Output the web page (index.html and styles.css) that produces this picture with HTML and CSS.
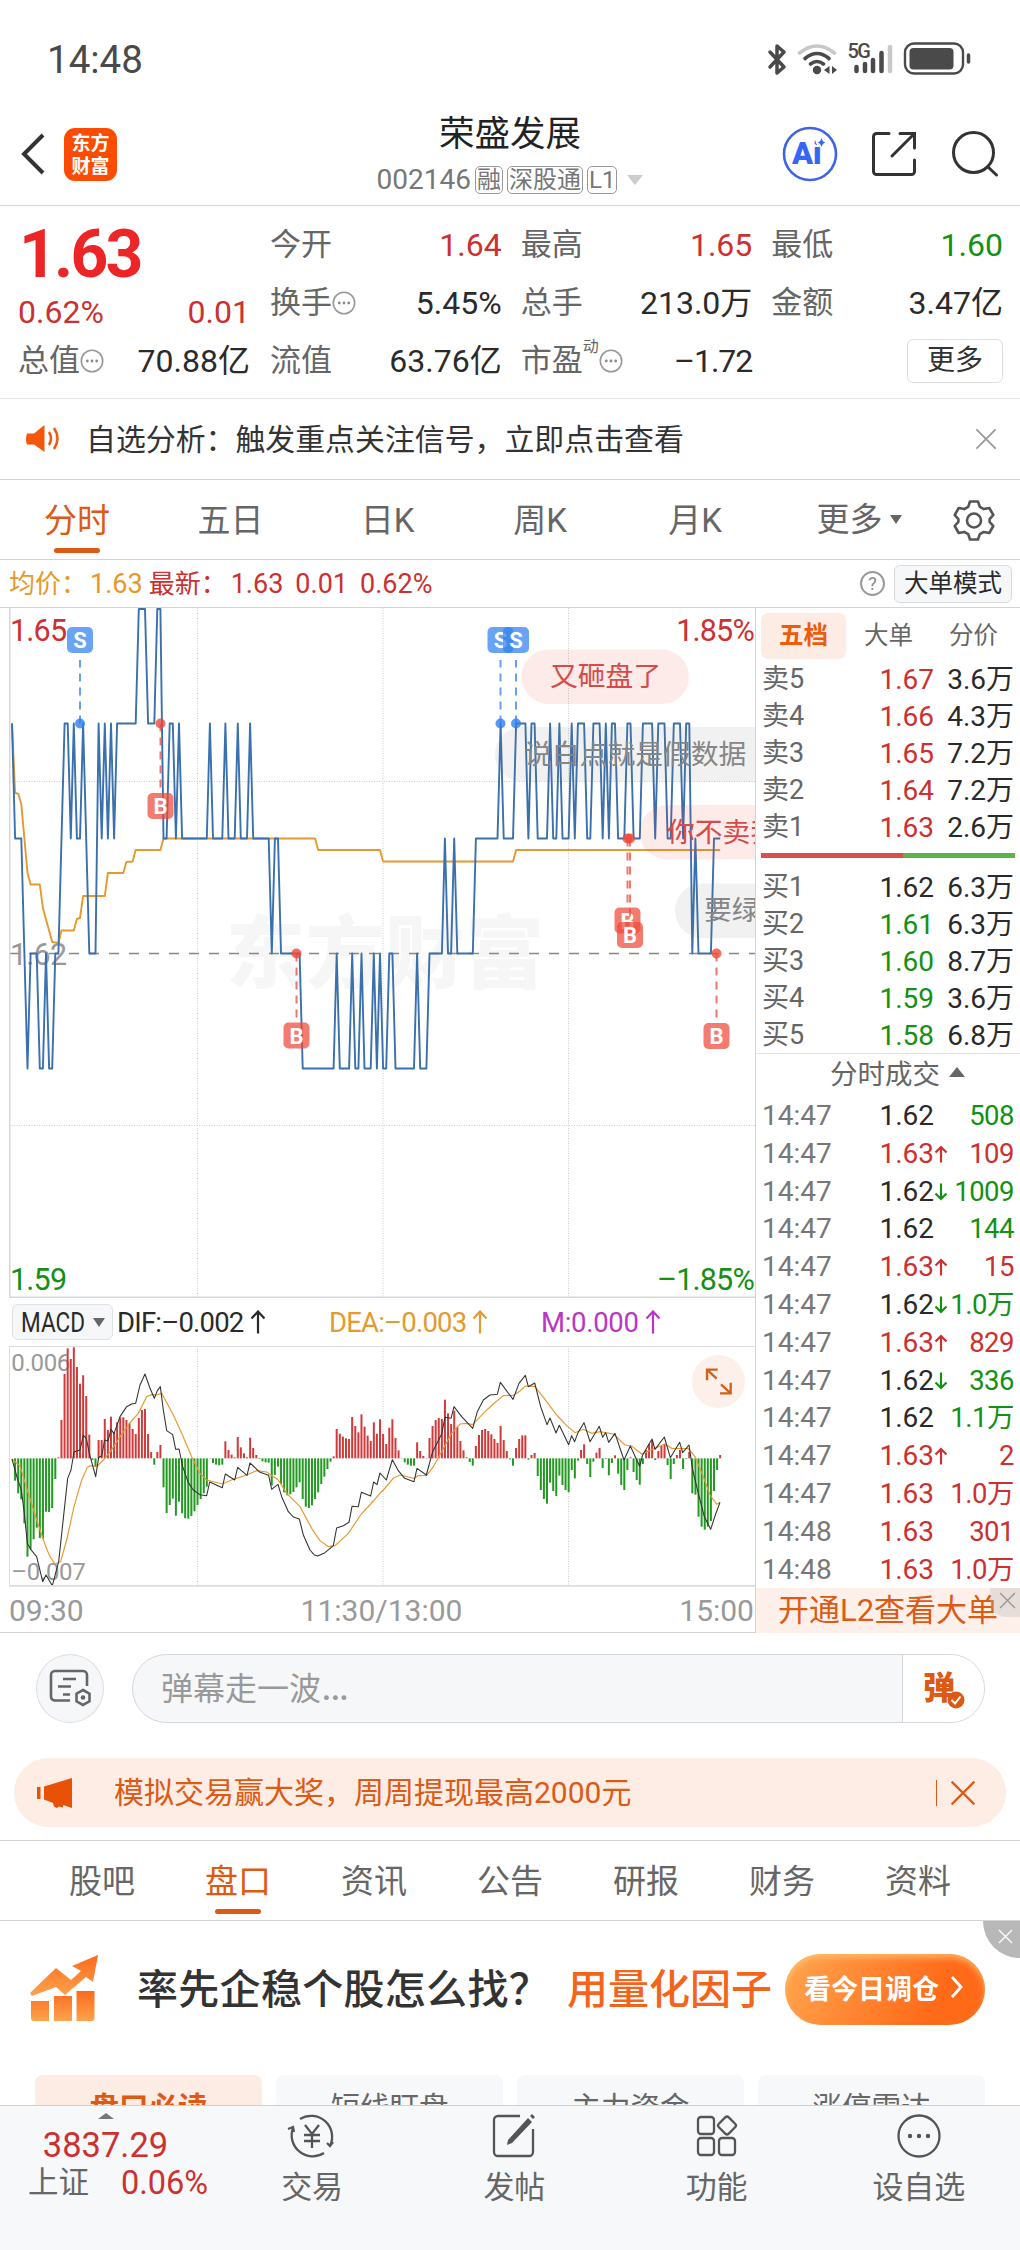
FILE: index.html
```html
<!doctype html>
<html lang="zh-CN">
<head>
	<meta charset="utf-8">
	<title>荣盛发展 002146</title>
	<link rel="stylesheet" href="styles.css">
</head>
<body>
	<svg class="defs" width="0" height="0">
		<symbol id="dots" viewBox="0 0 24 24"><circle cx="12" cy="12" r="10.7" fill="none" stroke="#999" stroke-width="1.6"/><circle cx="7.3" cy="12" r="1.4" fill="#888"/><circle cx="12" cy="12" r="1.4" fill="#888"/><circle cx="16.7" cy="12" r="1.4" fill="#888"/></symbol>
		<symbol id="cross" viewBox="0 0 24 24"><path d="M1.5 1.5l21 21M22.5 1.5l-21 21" fill="none" stroke="currentColor" stroke-width="2"/></symbol>
		<symbol id="up" viewBox="0 0 16 24"><path d="M8 23.5V1.5M1.5 8.5L8 1.5l6.500 7" fill="none" stroke="currentColor" stroke-width="2.2"/></symbol>
		<symbol id="tick-up" viewBox="0 0 14 18"><path d="M7 17.500V2M1.500 7.500L7 2l5.500 5.500" fill="none" stroke="currentColor" stroke-width="2.200"/></symbol>
	</svg>

	<div class="status">
		<span class="clock">14:48</span>
		<svg width="206" height="38" viewBox="764 41 206 38">
			<path d="M769 52l14 15-7 6V46l7 6-14 15" fill="none" stroke="#4a4a4a" stroke-width="3.500" stroke-linejoin="round" stroke-linecap="round"/>
			<g fill="none" stroke-width="3.600" stroke-linecap="round">
				<path d="M798.500 53q17.500-14 35 0" stroke="#c8c8c8"/>
				<path d="M804 58.500q12-10 24 0M809.500 64q6.500-5 13 0" stroke="#4a4a4a"/>
			</g>
			<circle cx="816" cy="70" r="4.200" fill="#4a4a4a"/>
			<path d="M828.500 66v8l-5.500-4zM831 66v8l5-4z" fill="#4a4a4a"/>
			<text x="846.500" y="58" class="net">5G</text>
			<g stroke-width="4.500" stroke-linecap="round">
				<path d="M855.500 67v4M864 64v7M872 60v11M880.500 53v18" stroke="#4a4a4a"/>
				<path d="M889 47v24" stroke="#c8c8c8"/>
			</g>
			<rect x="904" y="43.500" width="58" height="30" rx="9" fill="none" stroke="#4a4a4a" stroke-width="2.400"/>
			<rect x="908.500" y="48" width="44" height="21.500" rx="4" fill="#4a4a4a"/>
			<path d="M967.500 55v7" stroke="#4a4a4a" stroke-width="3.500" stroke-linecap="round"/>
		</svg>
	</div>

	<header class="header">
		<div class="header-left">
			<svg width="28" height="46" viewBox="0 0 28 46"><path d="M24 4L5 23l19 19" fill="none" stroke="#333" stroke-width="4"/></svg>
			<div class="logo"><b>东方</b><b>财富</b></div>
		</div>
		<div class="stock">
			<h1>荣盛发展</h1>
			<div class="code">002146<i>融</i><i>深股通</i><i>L1</i><span class="caret"></span></div>
		</div>
		<div class="header-right">
			<svg width="56" height="56" viewBox="0 0 56 56"><circle cx="28" cy="28" r="26" fill="#fff" stroke="#3f63e6" stroke-width="2.600"/><text x="10" y="38" class="ai">Ai</text><circle cx="38.500" cy="15" r="5" fill="#fff"/><path d="M39.500 12q1 4 4 4.500-3 .5-4 4.500-1-4-4-4.500 3-.5 4-4.500z" fill="#3566f5"/></svg>
			<svg width="48" height="48" viewBox="0 0 48 48"><g fill="none" stroke="#333" stroke-width="3" stroke-linecap="round"><path d="M19 3.500H6.500a3 3 0 0 0-3 3v35a3 3 0 0 0 3 3h35a3 3 0 0 0 3-3V30"/><path d="M30 3.500h14.500V18M44 4L22 26"/></g></svg>
			<svg width="50" height="50" viewBox="0 0 50 50"><g fill="none" stroke="#333" stroke-width="3" stroke-linecap="round"><circle cx="23.500" cy="23.500" r="20"/><path d="M38 38l8.500 8"/></g></svg>
		</div>
	</header>

	<section class="quote">
		<div class="quote-left">
			<div class="price">1.63</div>
			<div class="change red"><span>0.62%</span><span>0.01</span></div>
			<div class="cell"><label>总值<svg class="info"><use href="#dots"/></svg></label><span>70.88亿</span></div>
		</div>
		<div class="quote-grid">
			<div class="cell"><label>今开</label><span class="red">1.64</span></div>
			<div class="cell"><label>最高</label><span class="red">1.65</span></div>
			<div class="cell"><label>最低</label><span class="green">1.60</span></div>
			<div class="cell"><label>换手<svg class="info"><use href="#dots"/></svg></label><span>5.45%</span></div>
			<div class="cell"><label>总手</label><span>213.0万</span></div>
			<div class="cell"><label>金额</label><span>3.47亿</span></div>
			<div class="cell"><label>流值</label><span>63.76亿</span></div>
			<div class="cell"><label>市盈<sup>动</sup><svg class="info"><use href="#dots"/></svg></label><span class="neg">–1.72</span></div>
			<div class="cell cell-more"><button class="more">更多</button></div>
		</div>
	</section>

	<div class="notice">
		<svg width="36" height="30" viewBox="0 0 36 30"><path d="M2 9.500h7L19.500 1v27L9 20.500H2Q0 15 2 9.500z" fill="#f4580a"/><path d="M24 8q4 6.500 0 13M29 4q7 10.500 0 21" fill="none" stroke="#f4580a" stroke-width="2.500"/></svg>
		<p>自选分析：触发重点关注信号，立即点击查看</p>
		<svg class="close" width="22" height="22"><use href="#cross"/></svg>
	</div>

	<nav class="periods">
		<a class="on">分时</a>
		<a>五日</a>
		<a>日K</a>
		<a>周K</a>
		<a>月K</a>
		<a class="period-more">更多<span class="tri"></span></a>
		<a class="gear"><svg width="42" height="42" viewBox="0 0 42 42"><g fill="none" stroke="#555" stroke-width="2.600" stroke-linejoin="round"><path d="M17 2.500h8l1.800 5.300 4 2.300 5.500-1.100 4 7-3.700 4.200v2.600l3.700 4.200-4 7-5.500-1.100-4 2.300-1.800 5.300h-8l-1.800-5.300-4-2.300L5.700 34l-4-7 3.700-4.200v-2.600L1.700 16l4-7 5.500 1.100 4-2.300z"/><circle cx="21" cy="21.500" r="7"/></g></svg></a>
	</nav>

	<div class="summary">
		<span class="avg">均价：<em>1.63</em></span>
		<span class="last">最新：<em>1.63</em><em>0.01</em><em>0.62%</em></span>
		<span class="help">?</span>
		<span class="mode">大单模式</span>
	</div>

	<main class="market">
		<div class="charts">
			<svg class="main-chart" width="746" height="690" viewBox="9 608 746 690">
				<text x="226" y="982" class="mark" textLength="318">东方财富</text>
				<path class="grid" d="M197.500 608v690M383 608v690M568.500 608v690M9 781.500h746M9 1125.500h746"/>
				<path class="mid" d="M9 953.500h746"/>
				<text x="10" y="641" class="axis red">1.65</text>
				<text x="754" y="641" class="axis red end">1.85%</text>
				<text x="10" y="965" class="axis gray">1.62</text>
				<text x="10" y="1290" class="axis green">1.59</text>
				<text x="754" y="1290" class="axis green end">–1.85%</text>
				<path id="avg" class="avg-line"/>
				<path id="price" class="price-line"/>
				<g class="bubble hot"><rect x="521.500" y="649.500" width="167.500" height="54.500" rx="27"/><text x="550" y="686">又砸盘了</text></g>
				<g class="bubble"><rect x="495" y="727" width="300" height="54.500" rx="27"/><text x="524" y="764">说白点就是假数据</text></g>
				<g class="bubble hot"><rect x="640" y="805" width="200" height="54.500" rx="27"/><text x="667" y="842">你不卖我</text></g>
				<g class="bubble"><rect x="675" y="883.500" width="200" height="54.500" rx="27"/><text x="704" y="920">要绿</text></g>
				<g id="marks"></g>
				<path class="edge" d="M9.500 608v690"/>
				<path class="edge" d="M9 1297.500h746"/>
			</svg>
			<div class="indicator">
				<span class="chip"><b>MACD</b><span class="tri"></span></span>
				<span class="dif">DIF:–0.002<svg width="16" height="24"><use href="#up"/></svg></span>
				<span class="dea">DEA:–0.003<svg width="16" height="24"><use href="#up"/></svg></span>
				<span class="m">M:0.000<svg width="16" height="24"><use href="#up"/></svg></span>
			</div>
			<!-- 3 units per pixel -->
			<svg class="macd" width="746" height="241" viewBox="27 258 2238 723">
				<path class="grid3" d="M592.500 258v720M1149 258v720M1705.500 258v720"/>
				<text x="34" y="333">0.006</text>
				<text x="34" y="959">–0.007</text>
				<g id="bars"></g>
				<path class="dea-line" d="M36 597L60 618 82 690 110 780 138 862 150 890 165 912 182 905 200 840 222 740 245 660 262 622 272 617 290 620 310 600 333 572 360 530 390 488 415 460 440 410 455 404 470 405 485 400 520 465 545 520 575 590 600 640 620 660 667 672 700 658 740 645 770 632 800 636 835 660 860 700 900 740 935 805 960 842 985 860 1005 857 1045 820 1084 762 1112 732 1140 700 1150 690 1180 655 1200 645 1242 655 1255 647 1280 646 1300 620 1325 575 1355 520 1380 492 1400 490 1418 494 1450 460 1480 432 1510 407 1540 406 1560 393 1576 378 1605 380 1640 425 1670 465 1700 497 1725 518 1750 508 1775 520 1800 515 1840 522 1875 555 1895 558 1925 582 1960 567 1995 552 2015 565 2065 566 2085 590 2110 650 2130 705 2150 733 2160 727"/>
				<path class="dif-line" d="M36 597L52 655 64 690 73 760 82 850 92 868 110 890 128 965 138 945 157 977 176 905 203 655 213 630 222 576 240 570 250 526 259 535 268 580 287 650 296 592 305 588 314 540 324 543 333 508 342 521 360 470 380 440 395 432 407 430 420 375 435 342 450 385 463 415 472 392 481 380 490 450 500 512 518 524 527 568 537 567 548 620 565 668 580 690 600 704 620 707 629 666 667 683 676 642 704 660 713 622 741 646 750 609 780 637 806 646 815 688 834 673 845 710 865 755 880 771 898 777 910 825 930 870 942 884 953 888 975 878 1000 857 1010 804 1030 797 1047 787 1056 739 1075 740 1084 697 1112 708 1121 666 1131 674 1140 639 1159 660 1177 599 1195 632 1214 655 1242 665 1251 625 1279 645 1298 575 1325 522 1335 472 1353 475 1362 440 1385 470 1418 505 1432 455 1450 420 1470 405 1492 403 1501 367 1539 418 1557 370 1576 346 1585 380 1604 369 1622 440 1641 494 1650 474 1668 519 1678 496 1706 554 1715 527 1724 545 1733 520 1752 488 1770 545 1798 499 1808 532 1817 518 1826 547 1845 520 1872 600 1891 558 1919 619 1928 585 1956 537 1965 568 1993 531 2011 593 2039 547 2048 578 2067 555 2078 630 2095 700 2113 770 2132 808 2146 765 2160 727"/>
				<path d="M28.500 258v720M27 259.500h2238" stroke="#ddd" stroke-width="3" fill="none"/>
				<path d="M27 977.500h2238" stroke="#ddd" stroke-width="5" fill="none"/>
				<circle cx="2155.500" cy="364.500" r="79.500" fill="#fdf0ea"/>
				<path d="M2121 361v-32h32M2121 329l29 27M2192 368v32h-32M2192 400l-29-27" fill="none" stroke="#d4601c" stroke-width="7"/>
			</svg>
			<div class="times"><span>09:30</span><span>11:30/13:00</span><span>15:00</span></div>
		</div>

		<aside class="book">
			<div class="book-tabs"><a class="on">五档</a><a>大单</a><a>分价</a></div>
			<div class="levels">
				<div><label>卖5</label><b class="red">1.67</b><span>3.6万</span></div>
				<div><label>卖4</label><b class="red">1.66</b><span>4.3万</span></div>
				<div><label>卖3</label><b class="red">1.65</b><span>7.2万</span></div>
				<div><label>卖2</label><b class="red">1.64</b><span>7.2万</span></div>
				<div><label>卖1</label><b class="red">1.63</b><span>2.6万</span></div>
			</div>
			<div class="ratio"><i></i></div>
			<div class="levels buy">
				<div><label>买1</label><b>1.62</b><span>6.3万</span></div>
				<div><label>买2</label><b class="green">1.61</b><span>6.3万</span></div>
				<div><label>买3</label><b class="green">1.60</b><span>8.7万</span></div>
				<div><label>买4</label><b class="green">1.59</b><span>3.6万</span></div>
				<div><label>买5</label><b class="green">1.58</b><span>6.8万</span></div>
			</div>
			<div class="ticks-title">分时成交<span></span></div>
			<div class="ticks" id="ticks"></div>
			<div class="promo">开通L2查看大单<span><svg width="17" height="17"><use href="#cross"/></svg></span></div>
		</aside>
	</main>

	<div class="comment">
		<div class="comment-set"><svg width="42" height="40" viewBox="0 0 42 40"><g fill="none" stroke="#666" stroke-width="2.600"><path d="M21 31.500H6a4 4 0 0 1-4-4V6a4 4 0 0 1 4-4h28a4 4 0 0 1 4 4v11"/><path d="M14 10h13M9 17.500h13M14 25.500h7"/><path d="M34 21l6.500 3.700v7.600L34 36l-6.500-3.700v-7.600z"/></g><circle cx="34" cy="28.500" r="2.300" fill="#666"/></svg></div>
		<div class="comment-box">
			<span class="placeholder">弹幕走一波<i>…</i></span>
			<span class="danmu">弹<svg width="18" height="18" viewBox="0 0 18 18"><circle cx="9" cy="9" r="8.500" fill="#dc5a14"/><path d="M4.500 9l3.500 3.500 5.500-7" fill="none" stroke="#fff" stroke-width="2"/></svg></span>
		</div>
	</div>

	<div class="banner">
		<svg width="36" height="32" viewBox="0 0 36 32"><path d="M0 10h3.500v12H0zM7 9.500L35 1v30l-9-3v2.500l-4-1-2 1.500-3-1.500L16 26 7 22.500z" fill="#e85206"/></svg>
		<p>模拟交易赢大奖，周周提现最高2000元</p>
		<span class="banner-close"><svg width="26" height="26"><use href="#cross"/></svg></span>
	</div>

	<nav class="tabs">
		<a>股吧</a><a class="on">盘口</a><a>资讯</a><a>公告</a><a>研报</a><a>财务</a><a>资料</a>
	</nav>

	<div class="ad">
		<svg width="70" height="68" viewBox="0 0 70 68">
			<defs><linearGradient id="g" x1="0" y1="0" x2="0" y2="1"><stop offset="0" stop-color="#fb6a1e"/><stop offset="1" stop-color="#ffa34d"/></linearGradient></defs>
			<path d="M1 46h18v20H4q-3 0-3-3zM24 41h18v25H24zM46.500 36h18v27q0 3-3 3h-15z" fill="url(#g)"/>
			<path d="M0 38L26 13l15 12 10-9-9-5L68 0l-5 27-7-5-21 18-9-8L2 41z" fill="url(#g)"/>
		</svg>
		<p>率先企稳个股怎么找？</p>
		<p class="hl">用量化因子</p>
		<span class="cta">看今日调仓<svg width="14" height="24" viewBox="0 0 14 24"><path d="M2 2l9 10-9 10" fill="none" stroke="#fff" stroke-width="2.800"/></svg></span>
		<span class="ad-close"><svg width="15" height="15"><use href="#cross"/></svg></span>
	</div>

	<div class="cards"><a class="on">盘口必读</a><a>短线盯盘</a><a>主力资金</a><a>涨停雷达</a></div>

	<footer class="toolbar">
		<div class="index">
			<span class="tri-up"></span>
			<b>3837.29</b>
			<p><span>上证</span><em>0.06%</em></p>
		</div>
		<a><svg width="52" height="46" viewBox="0 0 52 46"><g fill="none" stroke="#555" stroke-width="2.300"><path d="M14 6A21 21 0 0 1 44 33M47 29l-3 4-3-3M38 40A21 21 0 0 1 7 15M2 16l5-2 1 5"/><path d="M19 12l7 9 7-9M26 21v14M18 22h16M18 28h16"/></g></svg>交易</a>
		<a><svg width="44" height="46" viewBox="0 0 44 46"><path d="M28 3H6a4 4 0 0 0-4 4v32a4 4 0 0 0 4 4h31a4 4 0 0 0 4-4V16" fill="none" stroke="#555" stroke-width="2.300"/><path d="M16 27L36 5l4 4-20 21-5 2zM38 3l2-2 3 3-2 2z" fill="#555"/></svg>发帖</a>
		<a><svg width="44" height="46" viewBox="0 0 44 46"><g fill="none" stroke="#555" stroke-width="2.300"><rect x="3" y="4" width="16" height="17" rx="3"/><rect x="3" y="25" width="16" height="17" rx="3"/><rect x="24" y="25" width="16" height="17" rx="3"/><rect x="25" y="5.500" width="14" height="14" rx="2.500" transform="rotate(45 32 12.500)"/></g></svg>功能</a>
		<a><svg width="46" height="46" viewBox="0 0 46 46"><circle cx="23" cy="23" r="20.500" fill="none" stroke="#555" stroke-width="2.300"/><circle cx="14" cy="23" r="2.200" fill="#555"/><circle cx="23" cy="23" r="2.200" fill="#555"/><circle cx="32" cy="23" r="2.200" fill="#555"/></svg>设自选</a>
	</footer>
	<script src="chart.js"></script>
</body>
</html>
```
FILE: styles.css
```css
* { box-sizing: border-box; margin: 0; padding: 0; }
body {
	width: 1020px; height: 2250px; overflow: hidden;
	display: flex; flex-direction: column;
	background: #fff; color: #2a2a2a;
	font-family: Roboto, "Noto Sans CJK SC", sans-serif;
}
svg { display: block; flex: none; }
i, em { font-style: normal; }
button { font: inherit; }
.defs { position: absolute; }
.red { color: #cc3030; fill: #cc3030; }
.green { color: #149014; fill: #149014; }
.gray { fill: #999; }

/* status bar */
.status { height: 106px; padding: 14px 49px 0 47px; display: flex; align-items: center; justify-content: space-between; flex: none; }
.clock { font-size: 38.500px; line-height: 44px; color: #4a4a4a; }
.net { font-size: 20px; font-weight: 500; fill: #4a4a4a; letter-spacing: -1.500px; }

/* header */
.header { height: 100px; flex: none; display: grid; grid-template-columns: 1fr auto 1fr; align-items: center; border-bottom: 1px solid #d4d4d4; }
.header-left { display: flex; align-items: center; gap: 17px; padding: 0 0 3px 19px; }
.logo { width: 53px; height: 53px; border-radius: 11px; background: #fc4c02; color: #fff; text-align: center; padding-top: 4px; }
.logo b { display: block; font-size: 19px; line-height: 23px; font-weight: 700; }
.stock { text-align: center; padding-top: 2px; }
.stock h1 { font-size: 35.500px; line-height: 46px; font-weight: 400; color: #222; }
.code { display: flex; align-items: center; height: 46px; font-size: 28px; color: #777; gap: 4px; }
.code i { font-size: 24px; line-height: 26px; border: 1.500px solid #999; border-radius: 5px; padding: 0 1px; }
.caret { margin-left: 6px; border: 8px solid transparent; border-top: 10px solid #ccc; border-bottom: 0; }
.header-right { display: flex; align-items: center; justify-content: flex-end; gap: 32px; padding: 0 20px 4px 0; }
.ai { font: 900 31px Roboto, sans-serif; fill: #3566f5; }

/* quote */
.quote { height: 193px; flex: none; display: flex; gap: 20px; padding: 10px 17px 0 18px; border-bottom: 1px solid #e8e8e8; font-size: 32px; }
.quote-left { width: 232px; }
.price { height: 76px; line-height: 77px; font-size: 66px; font-weight: 700; letter-spacing: -2.800px; color: #ec2626; padding-left: 1px; }
.change { height: 40px; line-height: 40px; display: flex; justify-content: space-between; }
.quote-grid { flex: 1; display: grid; grid-template-columns: repeat(3, 1fr); grid-auto-rows: 58px; column-gap: 19px; }
.cell { height: 58px; display: flex; align-items: center; justify-content: space-between; line-height: 58px; white-space: nowrap; }
.cell label { font-size: 31px; color: #666; display: flex; align-items: center; }
.cell sup { font-size: 16px; line-height: 20px; align-self: flex-start; margin-top: 5px; color: #666; }
.cell .neg { letter-spacing: -1px; }
.info { width: 24px; height: 24px; }
.cell-more { justify-content: flex-end; }
.more { width: 96px; height: 44px; font-size: 28px; line-height: 40px; background: #fff; color: #333; border: 1px solid #ddd; border-radius: 6px; }

.notice { height: 81px; flex: none; display: flex; align-items: center; padding: 0 23px 0 25px; border-bottom: 1px solid #d4d4d4; }
.notice p { font-size: 29.900px; margin-left: 25px; padding-bottom: 5px; color: #333; }
.close { margin-left: auto; color: #999; }

/* period tabs */
.periods { height: 80px; flex: none; display: flex; align-items: center; border-bottom: 1px solid #d4d4d4; font-size: 33px; color: #666; }
.periods a { width: 154px; height: 79px; line-height: 81px; text-align: center; position: relative; }
.periods a:nth-child(2) { width: 153px; }
.periods a:nth-child(3) { width: 161px; }
.periods a:nth-child(4) { width: 144px; }
.periods a:nth-child(5) { width: 166px; }
.periods .period-more { width: 162px; display: flex; align-items: center; justify-content: center; gap: 7px; }
.periods .gear { width: 80px; padding-left: 13px; display: flex; align-items: center; }
.periods .on, .tabs .on { color: #dc5a14; }
.periods .on:after, .tabs .on:after { content: ""; position: absolute; left: 50%; bottom: 6px; width: 46px; height: 5px; margin-left: -23px; border-radius: 3px; background: #dc5a14; }
.tri { border: 6px solid transparent; border-top: 9px solid #666; border-bottom: 0; }

.summary { height: 48px; flex: none; display: flex; align-items: center; padding: 0 8px 0 9px; border-bottom: 1px solid #d4d4d4; font-size: 26px; line-height: 40px; }
.summary em { font-size: 27px; margin-right: 12px; }
.avg { color: #e8982a; }
.avg em { margin: 0 6px 0 3px; }
.last { color: #cc3030; }
.last em:first-child { margin-left: 4px; }
.help { margin-left: auto; width: 25px; height: 25px; border: 2px solid #999; border-radius: 50%; font-size: 18px; line-height: 22px; text-align: center; color: #888; }
.mode { margin-left: 9px; height: 38px; width: 118px; text-align: center; line-height: 35px; font-size: 24.500px; background: #f6f7f9; border: 1px solid #d8dade; border-radius: 6px; }

/* charts */
.market { height: 1025px; flex: none; display: flex; border-bottom: 1px solid #d4d4d4; }
.charts { width: 756px; flex: none; border-right: 1px solid #d4d4d4; padding-left: 9px; }
.grid { fill: none; stroke: #ccc; stroke-dasharray: 1 1.500; }
.grid3 { fill: none; stroke: #ccc; stroke-width: 3; stroke-dasharray: 3 4.500; }
.mid { stroke: #888; stroke-width: 1.500; stroke-dasharray: 10 10; }
.edge { stroke: #d8d8d8; stroke-width: 2; }
.mark { font-size: 79px; font-weight: 900; fill: #f6f6f6; }
.axis { font-size: 30.500px; letter-spacing: -.8px; }
.end { text-anchor: end; }
.avg-line, .price-line { fill: none; stroke-width: 1.900; stroke-linejoin: round; }
.avg-line { stroke: #e49a30; }
.price-line { stroke: #3a70ae; }
.bubble rect { fill: rgba(120, 120, 120, .1); }
.bubble text { font-size: 27.800px; fill: #868686; }
.hot rect { fill: rgba(236, 60, 50, .1); }
.hot text { fill: #d64a48; }
.flag { font: 700 22px Roboto, sans-serif; fill: #fff; text-anchor: middle; }

.indicator { height: 48px; display: flex; align-items: center; font-size: 27.500px; }
.indicator > span { display: flex; align-items: center; gap: 6px; }
.chip { width: 101px; height: 36px; margin-left: 3px; padding-left: 8px; background: #f6f7f9; border: 1px solid #dfe1e4; border-radius: 6px; }
.chip b { width: 66px; font-weight: 400; transform: scaleX(.82); transform-origin: left; }
.dif { width: 212px; margin-left: 4px; letter-spacing: -.8px; }
.dea { width: 212px; letter-spacing: -.8px; color: #e49a30; }
.m { color: #bb35c4; letter-spacing: -.3px; }
.macd text { font-size: 72px; letter-spacing: -1px; fill: #999; }
.dif-line { fill: none; stroke: #333; stroke-width: 3.200; stroke-linejoin: round; }
.dea-line { fill: none; stroke: #e49a30; stroke-width: 3.500; }
.times { display: flex; justify-content: space-between; height: 46px; padding: 2px 1px 0 0; font-size: 30px; line-height: 44px; color: #999; }

/* order book */
.book { flex: 1; min-width: 0; padding-top: 5px; display: flex; flex-direction: column; }
.book-tabs { display: flex; height: 46px; padding-left: 5px; font-size: 24.500px; line-height: 46px; color: #666; flex: none; }
.book-tabs a { width: 85px; text-align: center; border-radius: 7px; }
.book-tabs .on { background: #fdece4; color: #ee5b0c; font-weight: 700; }
.levels { margin-top: 2px; }
.levels div, .ticks div { display: grid; grid-template-columns: 103px 69px 1fr; padding: 0 6px; height: 37px; line-height: 37px; font-size: 28px; }
.levels label { color: #666; font-size: 27px; }
.levels b, .ticks b { font-weight: 400; text-align: right; }
.levels span { text-align: right; font-size: 28px; white-space: nowrap; }
.ratio { height: 5px; margin: 7px 5px 9px; background: #5cb34c; flex: none; }
.ratio i { display: block; width: 142px; height: 5px; background: #d94f4b; }
.ticks-title { height: 44px; margin-top: -1px; border-top: 1px solid #e2e2e2; display: flex; align-items: center; justify-content: center; gap: 9px; padding: 0 5px 7px 24px; font-size: 27.500px; color: #666; flex: none; }
.ticks-title span { border: 8px solid transparent; border-bottom: 10px solid #666; border-top: 0; }
.ticks div { height: 37.800px; line-height: 38px; grid-template-columns: 103px 69px 16px 64px; }
.ticks div > :first-child { color: #777; }
.ticks svg { align-self: center; }
.ticks .down { transform: rotate(180deg); }
.ticks .vol { display: flex; justify-content: flex-end; font-size: 27.500px; letter-spacing: -.5px; white-space: nowrap; }
.promo { margin-top: auto; height: 45px; padding-left: 22px; background: #fdf0ea; color: #dc5a14; font-size: 31px; line-height: 46px; position: relative; flex: none; white-space: nowrap; }
.promo span { position: absolute; right: 0; top: 0; width: 30px; height: 29px; padding: 4px 0 0 9px; background: rgba(180, 180, 180, .3); border-radius: 0 0 0 16px; color: #999; }

/* danmu input and banner */
.comment { height: 125px; flex: none; display: flex; padding: 21px 35px 0 36px; gap: 28px; }
.comment-set { width: 68px; height: 69px; border-radius: 50%; border: 1px solid #dcdee2; background: #f6f7f9; display: flex; align-items: center; justify-content: center; }
.comment-box { flex: 1; height: 69px; display: flex; border: 1px solid #d4d6da; border-radius: 35px; background: #f6f7f9; overflow: hidden; }
.placeholder { flex: 1; padding-left: 28px; font-size: 32px; line-height: 69px; color: #999; }
.placeholder i { font-size: 42px; line-height: 40px; }
.danmu { width: 82px; padding-left: 20px; background: #fff; border-left: 1px solid #d4d6da; font-size: 32px; line-height: 66px; font-weight: 900; color: #dc5a14; position: relative; }
.danmu svg { position: absolute; left: 44px; top: 36px; }
.banner { height: 69px; flex: none; margin: 0 14px 13px; padding: 0 30px 0 23px; display: flex; align-items: center; border-radius: 35px; background: #fdede4; color: #dc5a14; }
.banner p { margin-left: 41px; padding-bottom: 5px; font-size: 30px; }
.banner-close { margin-left: auto; padding-left: 13px; border-left: 1.500px solid #dc5a14; }

.tabs { height: 81px; flex: none; display: flex; padding: 0 34px; border-top: 1px solid #d4d4d4; border-bottom: 1px solid #d4d4d4; font-size: 33px; color: #666; }
.tabs a { flex: 1; text-align: center; line-height: 82px; position: relative; }

/* promotion strip */
.ad { height: 154px; flex: none; display: flex; align-items: center; padding: 0 35px 18px 30px; position: relative; font-size: 41px; font-weight: 500; color: #333; white-space: nowrap; }
.ad p { margin-left: 37px; width: 410px; padding-bottom: 6px; letter-spacing: .3px; }
.ad .hl { margin-left: 20px; width: 218px; color: #f4641a; letter-spacing: 0; }
.cta { width: 200px; height: 71px; border-radius: 36px; padding: 0 0 4px 19px; display: flex; align-items: center; gap: 11px; color: #fff; font-size: 27px; font-weight: 700; background: linear-gradient(115deg, #ffa64f, #ff6a19 75%); box-shadow: inset 0 4px 6px rgba(255, 200, 120, .7); }
.ad-close { position: absolute; right: 0; top: 0; width: 37px; height: 37px; border-radius: 0 0 0 37px; background: #b8b8b8; color: #fff; padding: 8px 0 0 15px; }
.cards { height: 30px; flex: none; overflow: hidden; display: grid; grid-template-columns: repeat(4, 1fr); gap: 14px; padding: 0 35px; }
.cards a { height: 70px; border-radius: 8px; background: #f7f8fa; color: #666; font-size: 29.500px; line-height: 66px; text-align: center; }
.cards .on { background: #fdece4; color: #dc5a14; font-weight: 700; }

/* bottom toolbar */
.toolbar { height: 145px; flex: none; display: flex; background: #f7f8fa; border-top: 1px solid #cfcfcf; color: #666; font-size: 31px; }
.index { width: 211px; display: flex; flex-direction: column; align-items: center; padding-top: 7px; }
.tri-up { border: 8px solid transparent; border-bottom: 6px solid #777; border-top: 0; }
.index b { font-size: 34.500px; line-height: 40px; margin-top: 6px; font-weight: 400; color: #cc3030; }
.index p { width: 211px; padding: 0 2px 0 28px; display: flex; line-height: 36px; gap: 32px; white-space: nowrap; font-size: 30.500px; }
.index em { color: #cc3030; font-size: 32.500px; }
.toolbar a { width: 202.500px; display: flex; flex-direction: column; align-items: center; line-height: 44px; padding-top: 7px; gap: 7px; }
```
FILE: chart.js
```js
var NS = 'http://www.w3.org/2000/svg';

function minuteX(i) {
	return 12 + i * 3.0925;
}

function add(parent, name, attrs, text) {
	var el = document.createElementNS(NS, name);
	for (var key in attrs) {
		el.setAttribute(key, attrs[key]);
	}
	if (text) el.textContent = text;
	parent.appendChild(el);
}

// minute + price level, a = 1.65 down to e = 1.61
var levels = { a: 609, b: 723.5, c: 838.5, d: 953.5, e: 1068.5 };
var price = '0b 1c 3c 4d 5e 6d 8d 9e 10e 11d 12e 13e 14d 15d 17b 18b 19c 20b 21c 22c 23b 25d 27d 28b 29c 30b 31c 32b 33c 34b 40b 41a 43a 44b 46b 47a 48a 49c 50c 51b 52b 53c 54b 55c 63c 64b 65c 68c 69b 70c 72c 73b 74c 76c 77b 78c 83c 84d 85c 86c 87d 93d 94e 104e 105d 106e 109e 110d 111e 112e 113d 114e 116e 117d 118e 119d 120e 121e 122d 123d 124e 130e 131d 132e 134e 135d 139d 140c 141d 142d 143c 144d 149d 150c 157c 158b 159c 162c 163b 166b 167c 168b 169b 170c 173c 174b 175c 176c 177b 178c 180c 181b 182c 183b 185b 186c 187c 188b 190b 191c 192b 193c 194b 195b 196c 198c 199b 200b 201c 203c 204b 207b 208c 209b 211b 212c 213c 214b 216b 217c 218b 219b 220d 221c 222d 226d 227c 229c';

document.getElementById('price').setAttribute('d', 'M' + price.split(' ').map(function (p) {
	return minuteX(parseInt(p, 10)).toFixed(1) + ' ' + levels[p.slice(-1)];
}).join('L'));

var avg = [[0,723.5],[1,793],[2,793.6],[3,804],[4,838.5],[5,873],[6,884.5],[9,884.5],[10,908],[13,942],[15,943],[16,930.5],[20,930.5],[21,919],[22,918],[23,896],[30,896],[31,873],[36,873],[37,862],[39,861.5],[40,850],[48,850],[49,838.5],[98,838.5],[99,850],[119,850],[120,861.5],[162,861.5],[163,850],[229,850]];
document.getElementById('avg').setAttribute('d', 'M' + avg.map(function (p) {
	return minuteX(p[0]).toFixed(1) + ' ' + p[1];
}).join('L'));

// buy / sell flags: letter, x, dot y, flag y
var marks = document.getElementById('marks');
[
	['S', 80, 723.5, 640], ['S', 500.5, 723.5, 640], ['S', 516, 723.5, 640],
	['B', 160.5, 723.5, 806], ['B', 296.5, 953.5, 1035.5],
	['B', 627.5, 838.5, 920.5], ['B', 630, 838.5, 935], ['B', 716.5, 953.5, 1036]
].forEach(function (m) {
	var sell = m[0] == 'S';
	var color = sell ? '#2f80f0' : '#f04838';
	add(marks, 'path', { d: 'M' + m[1] + ' ' + m[2] + 'V' + (sell ? 660 : m[3] - 14), stroke: color, 'stroke-width': 2, 'stroke-dasharray': '8 6', opacity: 0.75 });
	add(marks, 'circle', { cx: m[1], cy: m[2], r: 5, fill: color, opacity: 0.8 });
	add(marks, 'rect', { x: m[1] - 13, y: m[3] - 13, width: 26, height: 26, rx: 5, fill: color, opacity: 0.72 });
	add(marks, 'text', { x: m[1], y: m[3] + 8, 'class': 'flag' }, m[0]);
});

// histogram ends for minutes 1..229, zero line at 595
var hist = [662,700,718,790,890,868,838,803,834,836,755,756,744,657,592,480,342,265,297,262,321,371,346,408,524,600,620,540,540,477,510,470,516,487,472,472,480,490,507,522,474,450,447,522,576,614,576,555,682,759,735,716,767,725,760,775,776,768,754,735,717,700,680,595,609,614,616,614,544,570,584,592,531,562,580,592,533,564,585,597,604,607,608,676,645,620,672,697,706,703,696,682,667,717,740,744,736,717,697,672,650,627,605,589,507,521,530,535,537,471,498,517,463,500,527,543,487,521,478,522,552,503,478,534,571,595,607,614,617,617,547,573,588,594,534,498,480,474,477,419,460,492,452,501,543,571,592,606,617,558,525,510,507,513,523,537,549,498,540,573,598,617,564,537,526,526,599,585,579,648,690,717,731,668,693,708,647,675,690,697,630,655,602,570,553,612,651,605,578,564,624,597,646,609,586,641,675,690,630,592,636,660,674,612,570,552,540,600,573,558,552,615,657,612,585,570,627,597,576,700,704,770,800,809,800,783,693,630,585];
var bars = document.getElementById('bars');
hist.forEach(function (y, i) {
	add(bars, 'rect', {
		x: (minuteX(i + 1) * 3 - 3).toFixed(1),
		y: Math.min(y, 595),
		width: 6,
		height: Math.max(Math.abs(y - 595), 1),
		fill: y < 595 ? '#d03a3a' : '#229a22'
	});
});

var ticks = [
	['14:47', '1.62', '', '508', 'green'],
	['14:47', '1.63', 'up', '109', 'red'],
	['14:47', '1.62', 'down', '1009', 'green'],
	['14:47', '1.62', '', '144', 'green'],
	['14:47', '1.63', 'up', '15', 'red'],
	['14:47', '1.62', 'down', '1.0万', 'green'],
	['14:47', '1.63', 'up', '829', 'red'],
	['14:47', '1.62', 'down', '336', 'green'],
	['14:47', '1.62', '', '1.1万', 'green'],
	['14:47', '1.63', 'up', '2', 'red'],
	['14:47', '1.63', '', '1.0万', 'red'],
	['14:48', '1.63', '', '301', 'red'],
	['14:48', '1.63', '', '1.0万', 'red']
];
document.getElementById('ticks').innerHTML = ticks.map(function (t) {
	var arrow = t[2] ? '<svg class="' + t[2] + ' ' + t[4] + '" width="14" height="18"><use href="#tick-up"/></svg>' : '<i></i>';
	return '<div><span>' + t[0] + '</span><b class="' + (t[1] == '1.63' ? 'red' : '') + '">' + t[1] + '</b>' + arrow + '<span class="vol ' + t[4] + '">' + t[3] + '</span></div>';
}).join('');
```
